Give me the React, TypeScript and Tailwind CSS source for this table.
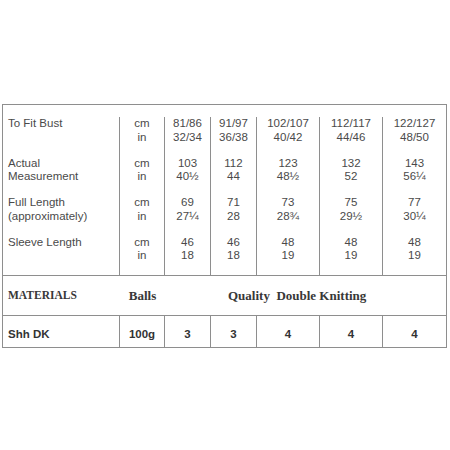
import React from "react";

const rows: { label: string[]; units: string[]; vals: string[][] }[] = [
  {
    label: ["To Fit Bust"],
    units: ["cm", "in"],
    vals: [
      ["81/86", "32/34"],
      ["91/97", "36/38"],
      ["102/107", "40/42"],
      ["112/117", "44/46"],
      ["122/127", "48/50"],
    ],
  },
  {
    label: ["Actual", "Measurement"],
    units: ["cm", "in"],
    vals: [
      ["103", "40½"],
      ["112", "44"],
      ["123", "48½"],
      ["132", "52"],
      ["143", "56¼"],
    ],
  },
  {
    label: ["Full Length", "(approximately)"],
    units: ["cm", "in"],
    vals: [
      ["69", "27¼"],
      ["71", "28"],
      ["73", "28¾"],
      ["75", "29½"],
      ["77", "30¼"],
    ],
  },
  {
    label: ["Sleeve Length"],
    units: ["cm", "in"],
    vals: [
      ["46", "18"],
      ["46", "18"],
      ["48", "19"],
      ["48", "19"],
      ["48", "19"],
    ],
  },
];

const cols = "grid grid-cols-[117px_45px_46px_46px_63px_63px_63px]";
const sans = { fontFamily: '"Liberation Sans", Arial, sans-serif' };
const serif = { fontFamily: '"Liberation Serif", "Times New Roman", serif' };

export default function App() {
  return (
    <div className="w-[450px] h-[450px] bg-white" style={sans}>
      <div className="pt-[104px] pl-[2px]">
        <div className="w-[445px] border border-[#8e8e8e] text-[#4a4a4a]">
          {/* measurement section */}
          <div className="pt-[12px] border-b border-[#8e8e8e]">
            {rows.map((r, i) => (
              <div key={i} className={`${cols} h-[39.5px]`}>
                <div className="border-r border-[#8e8e8e] pl-[5px] text-[11.5px] leading-[13.5px]">
                  {r.label.map((l, k) => (
                    <div key={k}>{l}</div>
                  ))}
                </div>
                <div className="border-r border-[#8e8e8e] text-center text-[11.5px] leading-[13.5px]">
                  {r.units.map((u, k) => (
                    <div key={k}>{u}</div>
                  ))}
                </div>
                {r.vals.map((v, j) => (
                  <div
                    key={j}
                    className={`${j < 4 ? "border-r border-[#8e8e8e]" : ""} text-center text-[11.5px] leading-[13.5px]`}
                  >
                    <div>{v[0]}</div>
                    <div>{v[1]}</div>
                  </div>
                ))}
              </div>
            ))}
          </div>
          {/* materials row */}
          <div className={`${cols} h-[40px] border-b border-[#8e8e8e] items-center font-bold text-[#383838]`} style={serif}>
            <div className="pl-[5px] text-[11.5px]">MATERIALS</div>
            <div className="text-center text-[13px]">Balls</div>
            <div className="col-span-5 pl-[63px] text-[13px] whitespace-pre">Quality  Double Knitting</div>
          </div>
          {/* yarn row */}
          <div className={`${cols} h-[31px] font-bold text-[11.5px] text-[#333]`}>
            <div className="border-r border-[#8e8e8e] pl-[5px] flex items-center pt-[6px]">Shh DK</div>
            <div className="border-r border-[#8e8e8e] flex items-center justify-center pt-[6px]">100g</div>
            <div className="border-r border-[#8e8e8e] flex items-center justify-center pt-[6px]">3</div>
            <div className="border-r border-[#8e8e8e] flex items-center justify-center pt-[6px]">3</div>
            <div className="border-r border-[#8e8e8e] flex items-center justify-center pt-[6px]">4</div>
            <div className="border-r border-[#8e8e8e] flex items-center justify-center pt-[6px]">4</div>
            <div className="flex items-center justify-center pt-[6px]">4</div>
          </div>
        </div>
      </div>
    </div>
  );
}
